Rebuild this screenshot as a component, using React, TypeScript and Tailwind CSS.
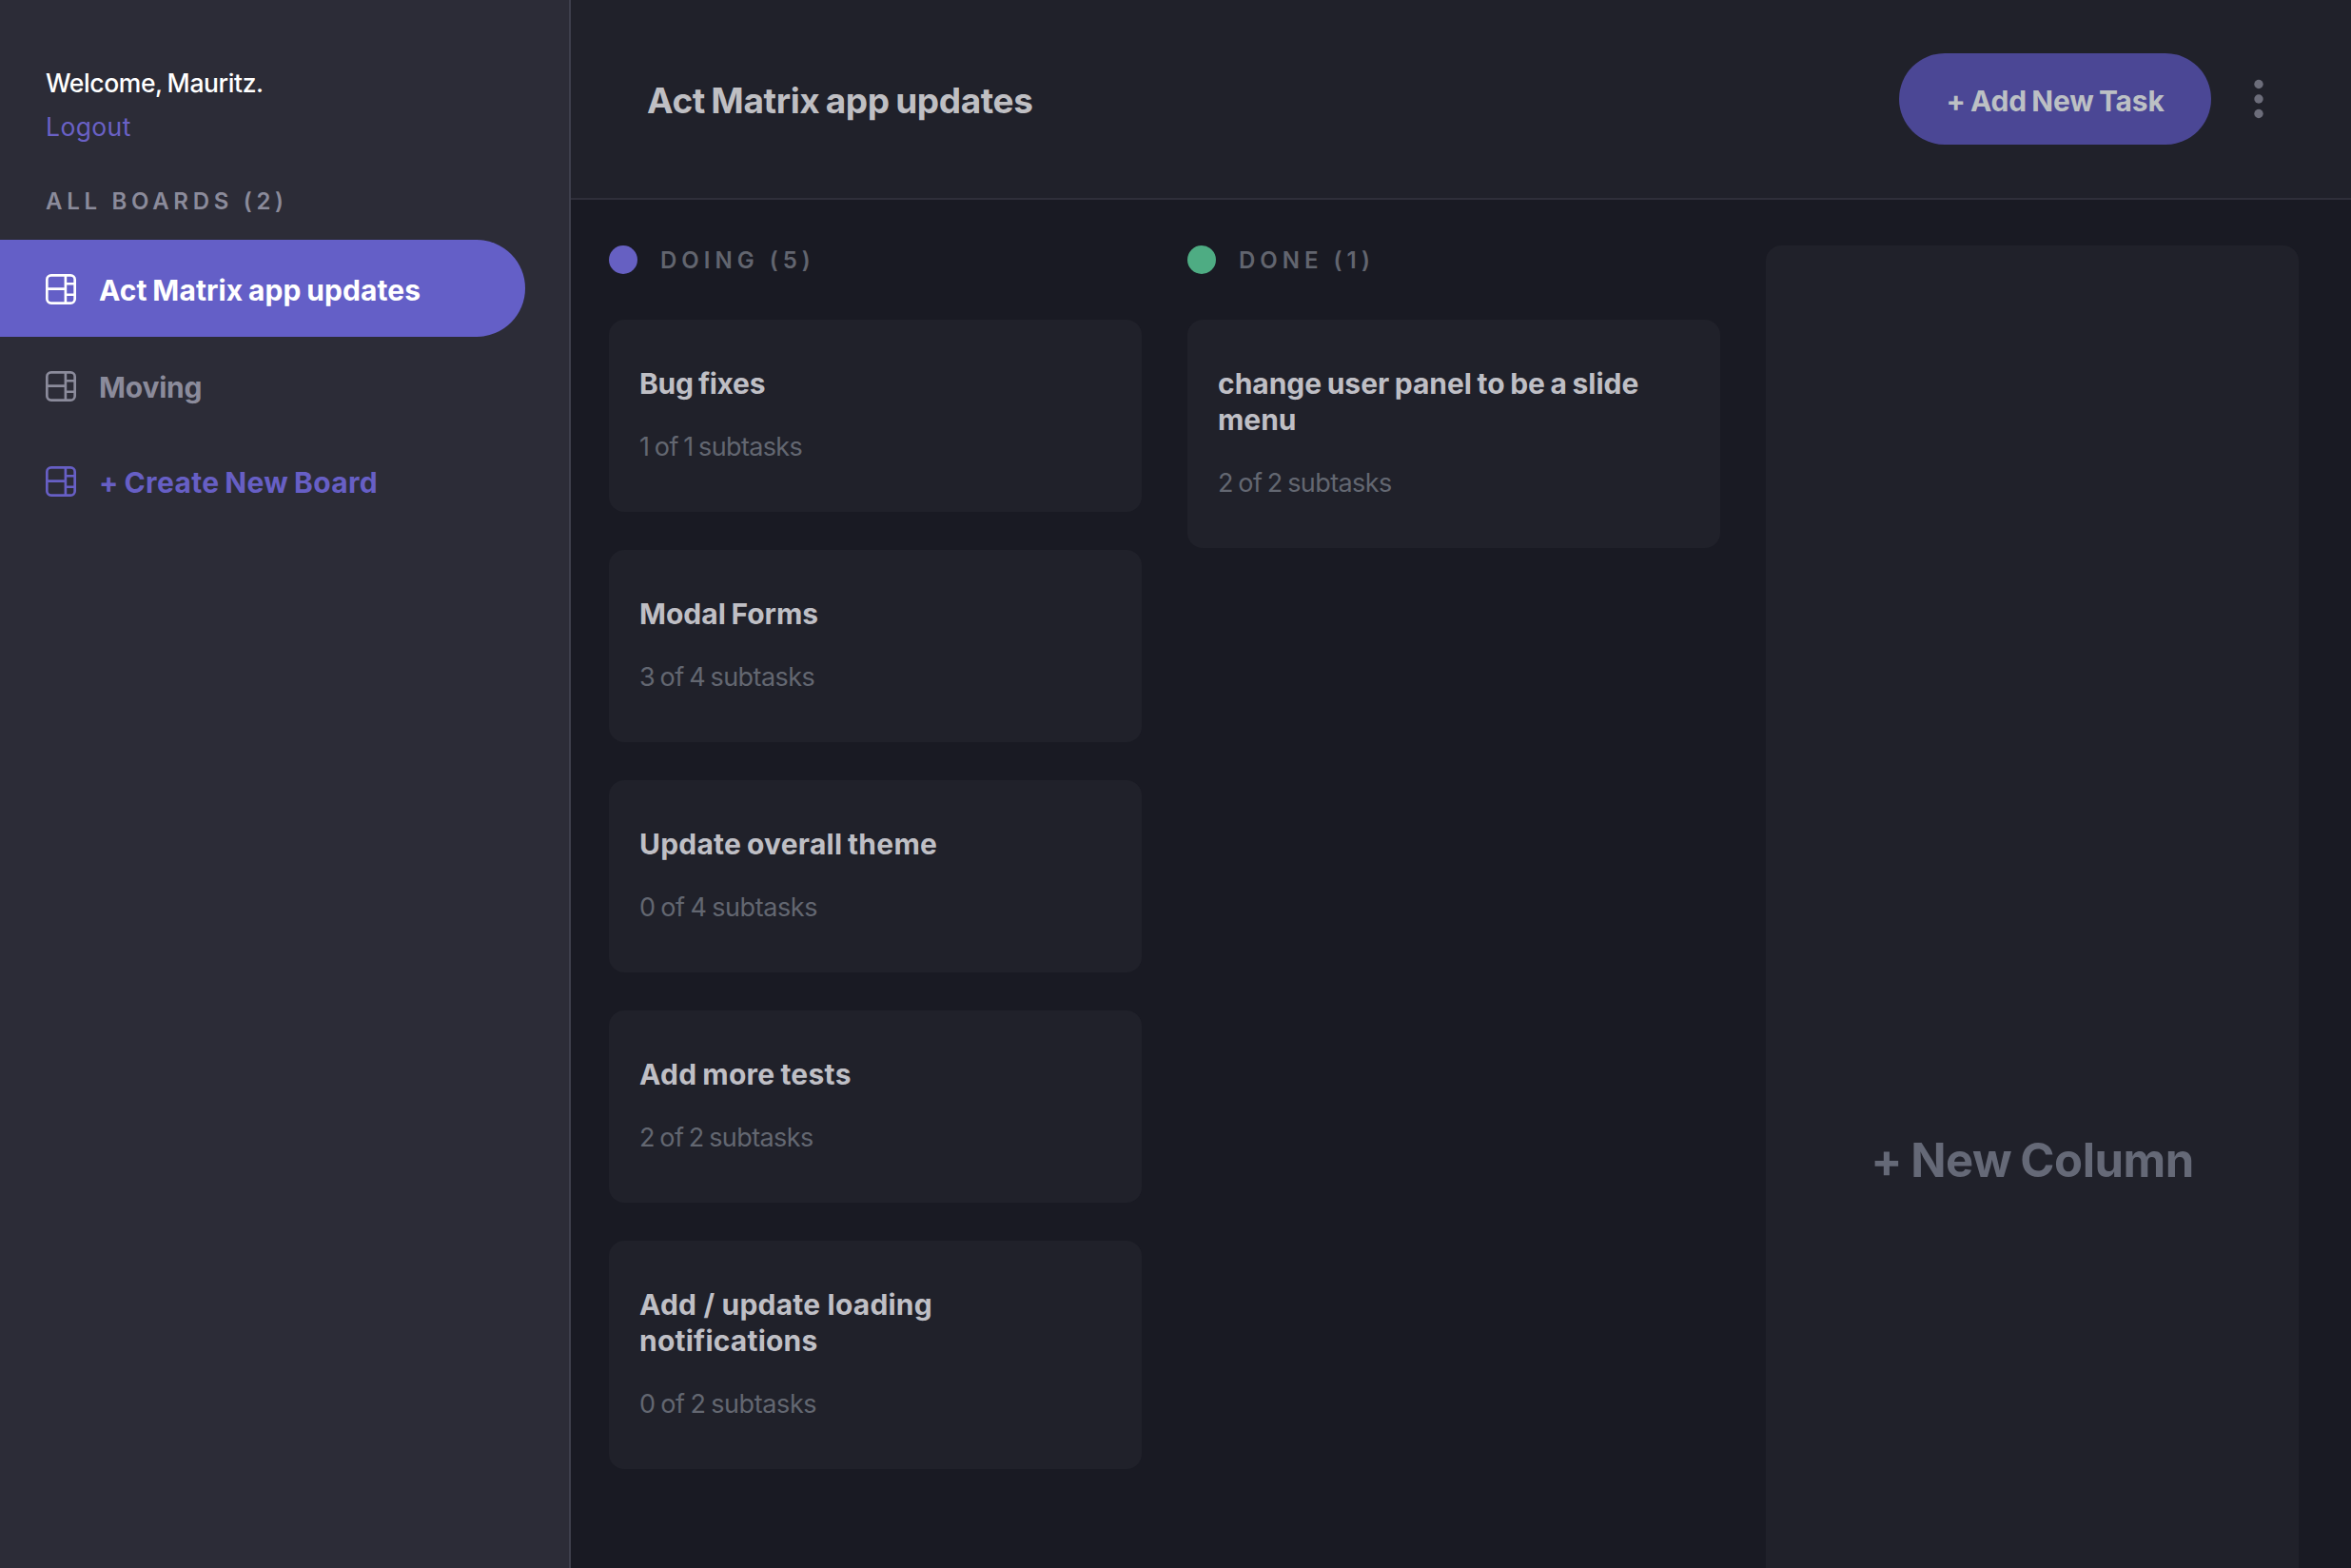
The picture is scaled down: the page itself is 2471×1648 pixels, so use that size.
type Task = { title: string; subtasks: string; titleSpacing: string; subSpacing: string };

const doing: Task[] = [
  { title: "Bug fixes", subtasks: "1 of 1 subtasks", titleSpacing: "tracking-[-0.3px]", subSpacing: "tracking-[-0.63px]" },
  { title: "Modal Forms", subtasks: "3 of 4 subtasks", titleSpacing: "tracking-[0px]", subSpacing: "tracking-[-0.58px]" },
  { title: "Update overall theme", subtasks: "0 of 4 subtasks", titleSpacing: "tracking-[0.23px]", subSpacing: "tracking-[-0.4px]" },
  { title: "Add more tests", subtasks: "2 of 2 subtasks", titleSpacing: "tracking-[0.28px]", subSpacing: "tracking-[-0.6px]" },
  { title: "Add / update loading notifications", subtasks: "0 of 2 subtasks", titleSpacing: "tracking-[0.2px] [word-spacing:0px]", subSpacing: "tracking-[-0.4px]" },
];

const done: Task[] = [
  {
    title: "change user panel to be a slide menu",
    subtasks: "2 of 2 subtasks",
    titleSpacing: "tracking-[-0.02px]",
    subSpacing: "tracking-[-0.6px]",
  },
];

function BoardIcon() {
  return (
    <svg viewBox="0 0 16 16" className="mt-px size-8 shrink-0 fill-current" aria-hidden="true">
      <path d="M0 2.889A2.889 2.889 0 0 1 2.889 0H13.11A2.889 2.889 0 0 1 16 2.889V13.11A2.888 2.888 0 0 1 13.111 16H2.89A2.889 2.889 0 0 1 0 13.111V2.89Zm1.333 5.555v4.667c0 .859.697 1.556 1.556 1.556h6.889V8.444H1.333Zm8.445-1.333V1.333h-6.89A1.556 1.556 0 0 0 1.334 2.89V7.11h8.445Zm4.889-1.333H11.11v4.444h3.556V5.778Zm0 5.778H11.11v3.11h2a1.556 1.556 0 0 0 1.556-1.555v-1.555Zm0-7.112V2.89a1.555 1.555 0 0 0-1.556-1.556h-2v3.111h3.556Z" />
    </svg>
  );
}

function TaskCard({ task }: { task: Task }) {
  return (
    <article className="rounded-2xl bg-[#20212a] px-8 pt-12 pb-[52px] [word-spacing:-1.5px]">
      <h3 className={`max-w-[470px] text-[30px] leading-[38px] font-[650] text-[#bfbfc5] ${task.titleSpacing}`}>{task.title}</h3>
      <p className={`mt-8 text-[27px] leading-8 text-[#636771] ${task.subSpacing}`}>{task.subtasks}</p>
    </article>
  );
}

function Column({ name, dot, tasks }: { name: string; dot: string; tasks: Task[] }) {
  return (
    <section className="w-[560px] shrink-0">
      <header className="mb-12 flex h-[30px] items-center gap-6">
        <span className={`size-[30px] rounded-full ${dot}`} />
        <h2 className="pt-0.5 text-2xl leading-8 font-semibold tracking-[5px] text-[#62656f]">
          {name} ({tasks.length})
        </h2>
      </header>
      <div className="flex flex-col gap-10">
        {tasks.map((task) => (
          <TaskCard key={task.title} task={task} />
        ))}
      </div>
    </section>
  );
}

export default function App() {
  return (
    <div className="flex h-screen w-full overflow-hidden bg-[#191a23] font-['Inter','Liberation_Sans',sans-serif]">
      <aside className="w-[600px] shrink-0 border-r-2 border-[#3e3f4c] bg-[#2c2c37] pt-16">
        <div className="px-12 text-[26.5px] leading-[46px]">
          <p className="font-medium tracking-[-0.4px] text-white [word-spacing:-1.5px]">Welcome, Mauritz.</p>
          <a className="block tracking-[0.4px] text-[#6a61c6]">Logout</a>
        </div>
        <h2 className="mt-10 mb-6 px-12 text-2xl leading-8 font-semibold tracking-[4.7px] text-[#8b8b9b]">ALL BOARDS (2)</h2>
        <nav className="text-[30px] leading-[38px] font-[650] [word-spacing:-1.5px]">
          <a className="flex h-[102px] w-[552px] items-center gap-6 rounded-r-full bg-[#645fc7] pl-12 text-white">
            <BoardIcon />
            <span className="pt-[3px] tracking-[0.1px]">Act Matrix app updates</span>
          </a>
          <a className="flex h-[102px] items-center gap-6 pl-12 text-[#8b8b9b]">
            <BoardIcon />
            <span className="pt-[3px] tracking-[-0.2px]">Moving</span>
          </a>
          <a className="flex h-[99px] items-center gap-6 pl-12 text-[#675fc5]">
            <BoardIcon />
            <span className="pt-0.5 tracking-[0.32px]">+ Create New Board</span>
          </a>
        </nav>
      </aside>

      <div className="flex min-w-0 flex-1 flex-col">
        <header className="flex h-[210px] shrink-0 items-center border-b-2 border-[#2f2f3a] bg-[#20212a] pr-[92px] pl-20">
          <h1 className="flex-1 pt-[3px] text-[37px] leading-[46px] font-[650] tracking-[-0.38px] text-[#bfbfc3] [word-spacing:-2px]">
            Act Matrix app updates
          </h1>
          <button className="flex h-24 w-[328px] items-center justify-center rounded-full bg-[#4b4795] pt-[3px] text-[30px] leading-[38px] font-[650] tracking-[-0.2px] text-[#bcc0c4] [word-spacing:-1.5px]">
            + Add New Task
          </button>
          <button className="ml-[45px]" aria-label="Board menu">
            <svg viewBox="0 0 10 42" className="h-[42px] w-2.5 fill-[#6c6d7a]">
              <circle cx="5" cy="5.5" r="4.7" />
              <circle cx="5" cy="21" r="4.7" />
              <circle cx="5" cy="36.5" r="4.7" />
            </svg>
          </button>
        </header>

        <main className="flex min-h-0 flex-1 items-start gap-12 overflow-hidden pt-12 pl-10">
          <Column name="DOING" dot="bg-[#6660c2]" tasks={doing} />
          <Column name="DONE" dot="bg-[#4eac83]" tasks={done} />
          <section className="flex h-[1924px] w-[560px] shrink-0 items-center justify-center rounded-2xl bg-[#20212a]">
            <button className="text-[49px] leading-[62px] font-[650] tracking-[-0.5px] text-[#656977] [word-spacing:-2px]">
              + New Column
            </button>
          </section>
        </main>
      </div>
    </div>
  );
}
